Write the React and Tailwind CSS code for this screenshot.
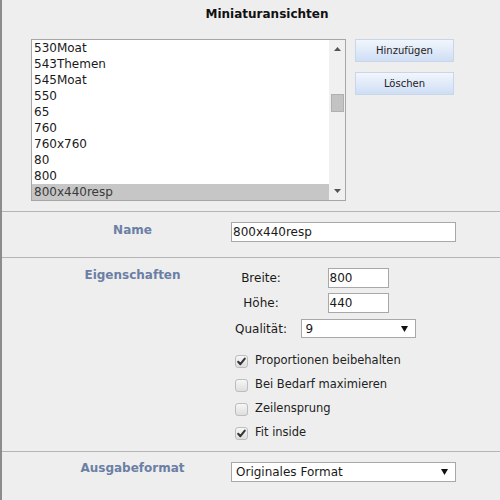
import React from "react";

const items = ["530Moat", "543Themen", "545Moat", "550", "65", "760", "760x760", "80", "800", "800x440resp"];

function Check({ checked, label }) {
  return (
    <div className="flex items-center h-[24px] pl-[4px]">
      <div className="w-[13px] h-[13px] rounded-[3px] border border-[#bdbdbd] bg-gradient-to-b from-[#f7f7f7] to-[#dedede] flex items-center justify-center">
        {checked && (
          <svg width="11" height="11" viewBox="0 0 11 11">
            <path d="M2.2 5.8 L4.4 8.2 L8.8 2.6" fill="none" stroke="#333" strokeWidth="2" strokeLinecap="round" strokeLinejoin="round" />
          </svg>
        )}
      </div>
      <span className="ml-[7px] text-[11.5px] text-[#222]">{label}</span>
    </div>
  );
}

function Arrow({ className = "" }) {
  return (
    <svg width="7" height="6" viewBox="0 0 7 6" className={className}>
      <path d="M0 0 L7 0 L3.5 6 Z" fill="#111" />
    </svg>
  );
}

export default function App() {
  return (
    <div className="w-[500px] h-[500px] overflow-hidden bg-[#eeeeee] border-l-2 border-[#8c8c8c] font-['DejaVu_Sans',sans-serif] text-[12px] text-[#1a1a1a]">
      <div className="h-[28px] pl-[32px] flex items-center justify-center">
        <span className="font-bold text-[12px] text-[#111]">Miniaturansichten</span>
      </div>

      <div className="flex pt-[11px] pl-[29px] pb-[10px] border-b border-[#b4b4b4]">
        <div className="w-[315px] h-[162px] border border-[#a6a6a6] bg-white flex">
          <div className="flex-1 flex flex-col">
            {items.map((it, i) => (
              <div
                key={it}
                className={
                  i === items.length - 1
                    ? "h-[16px] leading-[16px] pl-[2px] bg-[#c6c6c6] text-[#3a3a3a]"
                    : "h-[16px] leading-[16px] pl-[2px]"
                }
              >
                {it}
              </div>
            ))}
          </div>
          <div className="w-[16px] bg-[#f0f0f0] flex flex-col items-center">
            <svg width="7" height="4" viewBox="0 0 7 4" className="mt-[7px]">
              <path d="M0 4 L7 4 L3.5 0 Z" fill="#555" />
            </svg>
            <div className="mt-[43px] w-[13px] h-[18px] bg-[#c3c3c3] border border-[#b0b0b0]" />
            <div className="flex-1" />
            <svg width="7" height="4" viewBox="0 0 7 4" className="mb-[7px]">
              <path d="M0 0 L7 0 L3.5 4 Z" fill="#555" />
            </svg>
          </div>
        </div>
        <div className="ml-[9px] flex flex-col gap-[10px]">
          <div className="w-[99px] h-[23px] border border-[#c9d6ea] bg-gradient-to-b from-[#f2f6fc] to-[#cfdef5] flex items-center justify-center text-[10px] text-[#222]">
            Hinzufügen
          </div>
          <div className="w-[99px] h-[23px] border border-[#c9d6ea] bg-gradient-to-b from-[#f2f6fc] to-[#cfdef5] flex items-center justify-center text-[10px] text-[#222]">
            Löschen
          </div>
        </div>
      </div>

      <div className="flex items-start pt-[10px] pb-[15px] border-b border-[#b4b4b4]">
        <div className="w-[229px] pl-[32px] text-center font-bold text-[#6b7fa5] leading-[16px]">Name</div>
        <div className="w-[225px] h-[20px] border border-[#a8a8a8] bg-white pl-[1px] leading-[18px]">800x440resp</div>
      </div>

      <div className="flex items-start pt-[8px] h-[194px] border-b border-[#b4b4b4]">
        <div className="w-[229px] pl-[32px] pt-[1px] text-center font-bold text-[#6b7fa5] leading-[16px]">Eigenschaften</div>
        <div className="flex flex-col">
          <div className="grid grid-cols-[60px_134px] items-center pt-[2px]">
            <div className="text-center">Breite:</div>
            <div className="flex justify-center">
              <div className="w-[61px] h-[20px] border border-[#a8a8a8] bg-white pl-[1px] leading-[18px]">800</div>
            </div>
          </div>
          <div className="grid grid-cols-[60px_134px] items-center mt-[5px]">
            <div className="text-center">Höhe:</div>
            <div className="flex justify-center">
              <div className="w-[61px] h-[20px] border border-[#a8a8a8] bg-white pl-[1px] leading-[18px]">440</div>
            </div>
          </div>
          <div className="grid grid-cols-[60px_134px] items-center mt-[6px]">
            <div className="text-center">Qualität:</div>
            <div className="flex justify-center">
              <div className="w-[115px] h-[19px] border border-[#a8a8a8] bg-white pl-[4px] pr-[7px] flex items-center justify-between">
                <span>9</span>
                <Arrow />
              </div>
            </div>
          </div>
          <div className="mt-[11px] flex flex-col">
            <Check checked label="Proportionen beibehalten" />
            <Check label="Bei Bedarf maximieren" />
            <Check label="Zeilensprung" />
            <Check checked label="Fit inside" />
          </div>
        </div>
      </div>

      <div className="flex items-start pt-[10px]">
        <div className="w-[229px] pl-[32px] -mt-[2px] text-center font-bold text-[#6b7fa5] leading-[16px]">Ausgabeformat</div>
        <div className="w-[225px] h-[20px] border border-[#a8a8a8] bg-white pl-[4px] pr-[7px] flex items-center justify-between">
          <span>Originales Format</span>
          <Arrow />
        </div>
      </div>
    </div>
  );
}
